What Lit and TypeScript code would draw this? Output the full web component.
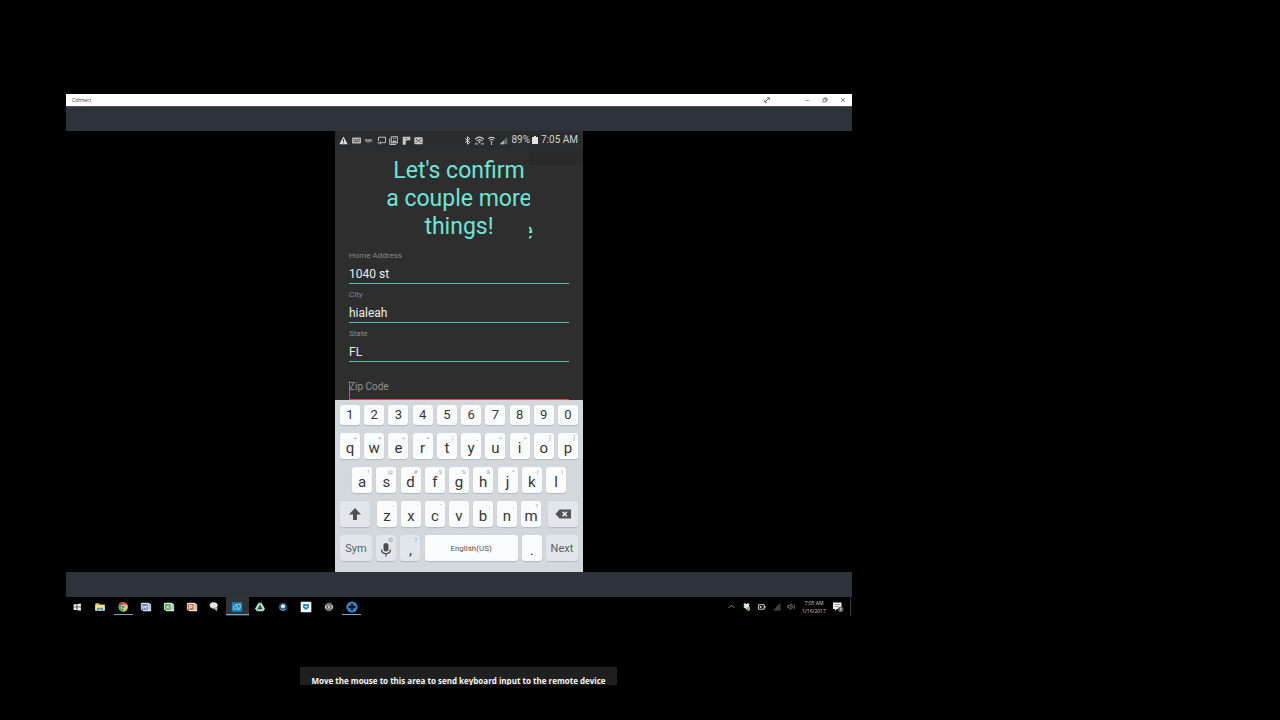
import { LitElement, html, css, svg } from "lit";
import { customElement } from "lit/decorators.js";
import { classMap } from "lit/directives/class-map.js";

const icon = (box: string, cls: string, body: unknown) =>
  html`<svg class=${cls} viewBox=${box} aria-hidden="true">${body}</svg>`;

const statusLeft = [
  svg`<path d="M6 .8 11.6 11H.4z" fill="#dcdcdc"/><path d="M6 4v3.6M6 8.6v1.3" stroke="#333" stroke-width="1.3"/>`,
  svg`<rect x="0" y="2" width="12" height="8" rx="1" fill="#b9b9b9"/><circle cx="3.6" cy="6" r="1.7" fill="none" stroke="#444"/><circle cx="8.4" cy="6" r="1.7" fill="none" stroke="#444"/><path d="M5 7.6h2" stroke="#444"/>`,
  svg`<path d="M1 4h10v2.4L9 8.6H3L1 6.4z" fill="#777"/><path d="M2.5 5.6h1.6M5.2 5.6h1.6M8 5.6h1.6" stroke="#aaa"/>`,
  svg`<path d="M2 6.5V1.6h9.4v7.2H7" fill="none" stroke="#c4c4c4" stroke-width="1.3"/><path d="M.5 9.2h5M3.8 7.2 6 9.2l-2.2 2" fill="none" stroke="#c4c4c4" stroke-width="1.3"/>`,
  svg`<path d="M1 3v8.3h8.5" fill="none" stroke="#c4c4c4" stroke-width="1.3"/><rect x="3" y="1" width="8.6" height="8.2" fill="none" stroke="#c4c4c4" stroke-width="1.3"/><path d="M4 8.5 6.2 5l1.6 2 1-1.3 2 2.8z" fill="#c4c4c4"/><path d="M5 3h5" stroke="#c4c4c4"/>`,
  svg`<path d="M1 1h10v4.5H6V7H5v4.5H1z" fill="#c9c9c9"/><path d="M5.5 3v4M3.5 3.2H9" stroke="#777" stroke-width=".8"/>`,
  svg`<rect x=".5" y="1.5" width="11" height="9.5" rx="1" fill="#c9c9c9"/><path d="m2.4 3.6 3.6 2.8 3.6-2.8M2.4 9l2.4-2.4M9.6 9 7.2 6.6" fill="none" stroke="#333" stroke-width="1.2"/>`,
];

const statusRight = [
  svg`<path d="m3 3.4 6 5-3 2.6V1l3 2.6-6 5" fill="none" stroke="#d6d6d6" stroke-width="1.3"/>`,
  svg`<path d="M0 4.2Q6-1.4 12 4.2M2 6.6Q6 3 10 6.6" fill="none" stroke="#d0d0d0" stroke-width="1.5"/><circle cx="6" cy="8" r="1.3" fill="#d0d0d0"/><path d="M.5 10.5h4M2 9l-1.6 1.5L2 12M7.500 10.500h4M10 9l1.600 1.500L10 12" fill="none" stroke="#d0d0d0"/>`,
  svg`<path d="M1.500 3.600Q6 0 10.500 3.600M3.400 5.800Q6 3.700 8.600 5.800" fill="none" stroke="#c8c8c8" stroke-width="1.4"/><path d="M4.200 7.200h3.600L6 9z" fill="#c8c8c8"/><path d="M6 8v4" stroke="#c8c8c8" stroke-width="1.4"/>`,
  svg`<path d="M11 1.500V11H1z" fill="#6c6c6c"/><path d="M6.500 5.800V11H1z" fill="#b5b5b5"/>`,
];

interface App { name: string; art: unknown; open?: boolean; active?: boolean }
const office = (c: string, mark: unknown) => svg`
  <path d="M2 2h8l3 2v8H4l-3-2V3z" fill="#dde3e6"/><path d="M2 3.500h7v7H2z" fill=${c}/>${mark}
  <path d="M10 5h2.400M10 7h2.400M10 9h2.400" stroke=${c} stroke-width=".9"/>`;

const apps: App[] = [
  { name: "Start", art: svg`<path d="m3 4 3.600-.5v3.200H3zM7.400 3.400 11.500 3v3.700H7.400zM3 7.400h3.600v3.300L3 10.200zM7.400 7.400h4.100v3.900l-4.100-.5z" fill="#f1f1f1"/>` },
  { name: "File Explorer", art: svg`<path d="M1.500 2.500h4l1 1.500h6v7.500h-11z" fill="#e8c65c"/><path d="M1.500 5h11v6h-11z" fill="#f5e29a"/><path d="M3.500 11.500V8h7v3.500h-2V9.600h-3v1.900z" fill="#3f9bc8"/>` },
  { name: "Chrome", open: true, art: svg`<circle cx="7" cy="7" r="5.600" fill="#4ba35a"/><path d="M7 7 2.100 4.200A5.600 5.600 0 0 1 11.900 4.200z" fill="#d9483b"/><path d="M7 7h5.600A5.600 5.600 0 0 0 11.700 4.200H7zM7 12.600A5.600 5.600 0 0 0 12.200 5H8.500z" fill="#edc240"/><circle cx="7" cy="7" r="2.600" fill="#f3f3f3"/><circle cx="7" cy="7" r="2" fill="#4681c9"/>` },
  { name: "Word", art: office("#6384c2", svg`<path d="m3 5.200 1 3.600 1.500-3 1.300 3 1-3.600" fill="none" stroke="#fff" stroke-width=".9"/>`) },
  { name: "Excel", art: office("#6ba56e", svg`<path d="m3.800 5.200 3.400 3.600M7.200 5.200 3.800 8.800" stroke="#fff" stroke-width=".9"/>`) },
  { name: "PowerPoint", art: office("#d5704c", svg`<path d="M4.300 9V5.200h1.600a1.200 1.200 0 0 1 0 2.400H4.300" fill="none" stroke="#fff" stroke-width=".9"/>`) },
  { name: "Snipping Tool", art: svg`<ellipse cx="6.600" cy="5" rx="4.600" ry="3.500" fill="#e4e4e4"/><path d="M6 7.500h5.500L10 12z" fill="#a9b4bc"/><path d="m4.500 8.500 3 1" stroke="#999"/>` },
  { name: "Connect", open: true, active: true, art: svg`<path d="M1 1.500h12v11H1z" fill="#1d84bd"/><path d="M5.500 5.300V4h5.300v4.500H8.500M3 6h4.500v3.500H3zM8.300 10h2" fill="none" stroke="#a9dcf2" stroke-width=".9"/>` },
  { name: "Drive", art: svg`<path d="M5.200 2h3.600l4 7-2 3H3.200l-2-3z" fill="#b9ddd3"/><path d="M7 4.500 4.200 9.500h5.600z" fill="#173e38"/><path d="m7 6-1.200 2.800M8.500 2 5 8M3.200 12l1.600-3" stroke="#3f8c7b" stroke-width=".9"/>` },
  { name: "Globe", art: svg`<circle cx="7" cy="7" r="5" fill="#24506f"/><circle cx="7" cy="6.200" r="2.500" fill="#d6edf5"/><path d="M3.500 9.500Q7 12.500 10.500 9.500" stroke="#7d9fba" fill="none"/>` },
  { name: "Dropbox", art: svg`<rect x=".8" y=".8" width="12.400" height="12.400" rx="1" fill="#f4f8fb"/><path d="m3.600 4 2-.8L7 4.400l1.400-1.200 2 .8v3.600L7 10.400 3.600 7.600z" fill="#2479c2"/><path d="m5.300 5.300 1.700 1 1.700-1v1.500L7 7.800l-1.700-1z" fill="#f4f8fb"/>` },
  { name: "Media", art: svg`<circle cx="7" cy="7" r="5" fill="#777"/><path d="M2.300 5.500h9.400v3H2.300z" fill="#d0d0d0"/><path d="M4 6.200h2v1.600H4zM8 6.200h2v1.600H8z" fill="#333"/>` },
  { name: "Support", open: true, art: svg`<circle cx="7" cy="7" r="6.500" fill="#2b8fce"/><path d="M5.500 3h3v2.500H11v3H8.500V11h-3V8.500H3v-3h2.500z" fill="#07161f"/>` },
];

const rows: [string, string][][] = [
  [["q", "+"], ["w", "×"], ["e", "÷"], ["r", "="], ["t", "/"], ["y", "_"], ["u", "<"], ["i", ">"], ["o", "["], ["p", "]"]],
  [["a", "!"], ["s", "@"], ["d", "#"], ["f", "$"], ["g", "%"], ["h", "&"], ["j", "*"], ["k", "("], ["l", ")"]],
  [["z", "-"], ["x", "'"], ["c", "\""], ["v", ":"], ["b", ";"], ["n", ","], ["m", "?"]],
];

@customElement("app-root")
export class AppRoot extends LitElement {
  static styles = css`
    :host { display: block; min-height: 100vh; box-sizing: border-box; padding: 94px 0 0 66px; background: #000; font-family: "Open Sans", "Noto Sans", sans-serif; }
    * { box-sizing: border-box; }
    button, input { font: inherit; color: inherit; margin: 0; padding: 0; border: 0; background: none; outline: none; }
    .desktop { max-width: 786px; }
    .titlebar { display: flex; align-items: center; height: 12px; padding: 0 5px 0 6px; background: #fff; color: #333; font-size: 5px; line-height: 12px; }
    .titlebar span { flex: 1; }
    .win { display: flex; width: 8px; height: 8px; margin-left: 10px; }
    .win.expand { margin-right: 22px; }
    .win svg { width: 8px; height: 8px; }
    .band { height: 25px; background: #2c333b; }
    .titlebar + .band { border-top: 1px solid #4b5157; }
    .stage { display: flex; justify-content: center; }
    .phone { position: relative; width: 248px; background: #2e2e2e; font-family: Roboto, sans-serif; }
    .status { display: flex; align-items: center; height: 18px; padding: 0 5px 0 4px; color: #d2d2d2; font-size: 10px; line-height: 18px; background: #2b2c2d; }
    .notes { display: flex; justify-content: space-between; width: 84px; margin-right: auto; }
    .signals { display: flex; gap: 3px; margin-right: 3px; }
    .st { width: 9px; height: 9px; flex: none; }
    .batt { width: 6px; height: 8px; margin: 0 3px 0 2px; }
    h1 { margin: 8px 0 4px; font-size: 23px; line-height: 28px; font-weight: 400; color: #6fe3d8; text-align: center; clip-path: inset(0 53px 0 0); }
    .patch { position: absolute; right: 0; top: 18px; width: 54px; height: 16px; background: #2a2a2a; }
    .ghost { position: absolute; left: 194px; top: 95px; width: 4px; height: 16px; overflow: hidden; display: flex; justify-content: flex-end; color: #6fe3d8; font-size: 23px; line-height: 12px; }
    .field { display: flex; flex-direction: column; height: 39px; padding: 6px 14px 0; }
    .field label { color: #8b8786; font-size: 8px; line-height: 10px; }
    .field input { width: 100%; height: 23px; padding: 4px 0 0; border-bottom: 1px solid #56bdb4; color: #ececec; font-size: 12px; line-height: 18px; }
    .field.zip { position: relative; height: 38px; padding-top: 12px; }
    .field.zip input { height: 26px; padding: 0; border-color: #d24c57; font-size: 10px; }
    .field.zip input::placeholder { color: #96908f; opacity: 1; }
    .caret { position: absolute; left: 14px; top: 19px; width: 1px; height: 18px; background: #e2525b; }
    .keyboard { display: flex; flex-direction: column; gap: 8px; padding: 5px 5px 11px; background: #d3d8dc; }
    .row { display: flex; justify-content: space-between; }
    .row.inset { padding: 0 12px; }
    .letters { display: flex; gap: 4px; }
    .key { position: relative; flex: none; display: flex; align-items: center; justify-content: center; width: 20px; height: 26px; border-radius: 3px; background: #fbfcfd; box-shadow: 0 1px 1px #b4babf; color: #363636; font-size: 15px; line-height: 16px; padding-top: 3px; }
    .key.num { height: 20px; padding: 0; font-size: 13px; }
    .key.grey { background: #e2e6ea; }
    .key.wide { width: 30px; padding-top: 0; }
    .key.word { width: 32px; padding-top: 2px; font-size: 11px; color: #5b5e61; }
    .key.space { width: 93px; padding-top: 2px; font-size: 8px; color: #555; }
    .alt { position: absolute; right: 3px; top: 1px; font-size: 6px; line-height: 7px; color: #9a9ea2; }
    .glyph { width: 16px; height: 16px; }
    .taskbar { display: flex; justify-content: space-between; height: 19px; }
    .apps { display: flex; width: 297px; }
    .app { flex: 1; display: flex; align-items: center; justify-content: center; height: 19px; position: relative; }
    .app svg { width: 12px; height: 12px; }
    .app.active { background: #303437; }
    .app.open::after { content: ""; position: absolute; left: 2px; right: 2px; bottom: 1px; height: 1px; background: #70a9d6; }
    .app.active::after { left: 0; right: 0; }
    .tray { display: flex; align-items: center; gap: 6px; border-right: 1px solid #333; margin-right: 1px; padding-right: 6px; color: #d0d0d0; }
    .tray svg { width: 9px; height: 9px; }
    .clock { width: 24px; text-align: center; font-size: 5px; line-height: 8px; white-space: nowrap; display: flex; flex-direction: column; align-items: center; }
    .tray .note { width: 12px; height: 12px; }
    .hint { width: 317px; height: 18px; margin: 51px 0 0 234px; padding-top: 7px; overflow: hidden; background: #1f1f1f; color: #f4f4f4; font-size: 8px; line-height: 14px; font-weight: 700; text-align: center; white-space: nowrap; }
  `;

  private key(k: string, alt = "", cls = "") {
    return html`<button class="key ${cls}">${k}${alt ? html`<span class="alt">${alt}</span>` : ""}</button>`;
  }

  private field(id: string, label: string, value: string) {
    return html`<div class="field"><label for=${id}>${label}</label><input id=${id} .value=${value} /></div>`;
  }

  private win(name: string, cls: string, body: unknown) {
    return html`<button class="win ${cls}" aria-label=${name}>${icon("0 0 8 8", "", body)}</button>`;
  }

  render() {
    return html`
      <main class="desktop">
        <header class="titlebar">
          <span>Connect</span>
          ${this.win("Full screen", "expand", svg`<path d="M2 6 6 2M4 1.700h2.300V4M1.700 4v2.300H4" fill="none" stroke="#555" stroke-width=".8"/>`)}
          ${this.win("Minimize", "", svg`<path d="M2 4.500h4" stroke="#888" stroke-width=".7"/>`)}
          ${this.win("Restore", "", svg`<path d="M2 3h3v3H2zM3 3V2h3v3H5" fill="none" stroke="#555" stroke-width=".7"/>`)}
          ${this.win("Close", "", svg`<path d="m2 2 4 4M6 2 2 6" stroke="#555" stroke-width=".7"/>`)}
        </header>
        <div class="band"></div>
        <div class="stage">
          <section class="phone">
            <div class="status">
              <div class="notes">${statusLeft.map((s) => icon("0 0 12 12", "st", s))}</div>
              <div class="signals">${statusRight.map((s) => icon("0 0 12 12", "st", s))}</div>
              <span>89%</span>
              ${icon("0 0 6 8", "batt", svg`<path d="M2 0h2v1h2v7H0V1h2z" fill="#e4e4e4"/>`)}
              <span>7:05 AM</span>
            </div>
            <div class="patch"></div>
            <h1>Let's confirm<br />a couple more<br />things!</h1>
            <span class="ghost" aria-hidden="true">e</span>
            ${this.field("home", "Home Address", "1040 st")}
            ${this.field("city", "City", "hialeah")}
            ${this.field("state", "State", "FL")}
            <div class="field zip">
              <input id="zip" aria-label="Zip Code" placeholder="Zip Code" /><i class="caret"></i>
            </div>
            <div class="keyboard">
              <div class="row">${[..."1234567890"].map((n) => this.key(n, "", "num"))}</div>
              <div class="row">${rows[0].map(([k, a]) => this.key(k, a))}</div>
              <div class="row inset">${rows[1].map(([k, a]) => this.key(k, a))}</div>
              <div class="row">
                <button class="key grey wide" aria-label="Shift">${icon("0 0 16 16", "glyph", svg`<path d="m8 2 6 6.500h-4V14H6V8.500H2z" fill="#505356"/>`)}</button>
                <div class="letters">${rows[2].map(([k, a]) => this.key(k, a))}</div>
                <button class="key grey wide" aria-label="Backspace">${icon("0 0 16 16", "glyph", svg`<path d="M.5 8 4.500 3.500h11.500v9H4.500z" fill="#505356"/><path d="m7.500 5.800 4.400 4.400M11.900 5.800 7.500 10.200" stroke="#eef0f2" stroke-width="1.500"/>`)}</button>
              </div>
              <div class="row">
                ${this.key("Sym", "", "grey word")}
                <button class="key grey" aria-label="Voice input">${icon("0 0 16 16", "glyph", svg`<rect x="5.500" y="1" width="5" height="8.500" rx="2.500" fill="#4c4f52"/><path d="M3.500 7.500c0 5.500 9 5.500 9 0M8 11.500v3" fill="none" stroke="#4c4f52" stroke-width="1.300"/>`)}<span class="alt">⚙</span></button>
                ${this.key(",", "?", "grey")}
                ${this.key("English(US)", "", "space")}
                ${this.key(".")}
                ${this.key("Next", "", "grey word")}
              </div>
            </div>
          </section>
        </div>
        <div class="band"></div>
        <footer class="taskbar">
          <nav class="apps">
            ${apps.map((a) => html`<button class=${classMap({ app: true, open: !!a.open, active: !!a.active })} aria-label=${a.name}>${icon("0 0 14 14", "", a.art)}</button>`)}
          </nav>
          <div class="tray">
            ${icon("0 0 10 10", "", svg`<path d="m2 6.500 3-3 3 3" fill="none" stroke="#999"/>`)}
            ${icon("0 0 10 10", "", svg`<path d="m1.500 2.500 2-1.500L5 2.500 6.500 1l2 1.500-1 1.700 1 1.400L5 8 1.500 5.600l1-1.400z" fill="#e0ece4"/><path d="M5 6h4v3.500H5z" fill="#75b37a"/>`)}
            ${icon("0 0 10 10", "", svg`<path d="M1.500 3h6.500v5H1.500zM8 4.500h1v2H8" fill="none" stroke="#ddd"/><path d="M3 4.500h2v2H3z" fill="#ddd"/>`)}
            ${icon("0 0 10 10", "", svg`<path d="M9 1v8.500H1z" fill="#333"/><path d="M3 9.500V7.500M5 9.500v-4M7 9.500v-6M9 9.500v-8" stroke="#484848"/>`)}
            ${icon("0 0 10 10", "", svg`<path d="M.8 4h1.700l2-1.800v6L2.500 6.500H.8z" fill="none" stroke="#999" stroke-width=".8"/><path d="M6 3.500q1.200 1.700 0 3.400M7.600 2.500q2 2.700 0 5.400" fill="none" stroke="#888" stroke-width=".8"/>`)}
            <div class="clock"><span>7:05 AM</span><span>1/16/2017</span></div>
            ${icon("0 0 12 12", "note", svg`<path d="M1 1.500h8.500v6.500H5L3 10V8H1z" fill="#eee"/><path d="M2.500 3.500h5.500M2.500 5.500h4" stroke="#888" stroke-width=".7"/><circle cx="8.700" cy="8.500" r="2.800" fill="#555"/><path d="M7.800 7.200h1.700L8.700 8.300q1.600.8-.9 1.500" fill="none" stroke="#eee" stroke-width=".7"/>`)}
          </div>
        </footer>
        <div class="hint" role="tooltip">Move the mouse to this area to send keyboard input to the remote device</div>
      </main>
    `;
  }
}
